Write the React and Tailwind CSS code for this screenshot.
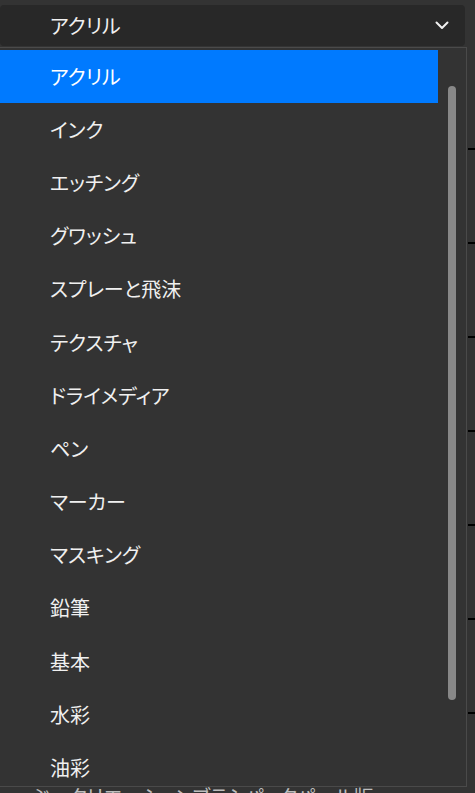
import React from 'react';

const brushes = [
  'アクリル',
  'インク',
  'エッチング',
  'グワッシュ',
  'スプレーと飛沫',
  'テクスチャ',
  'ドライメディア',
  'ペン',
  'マーカー',
  'マスキング',
  '鉛筆',
  '基本',
  '水彩',
  '油彩',
];

const font = "font-['Yu_Gothic_UI','Noto_Sans_CJK_JP',sans-serif] [font-feature-settings:'palt']";

const App = () => {
  const selected = 'アクリル';

  return (
    <div className={`relative h-[793px] w-[475px] overflow-hidden bg-[#333333] ${font}`}>
      {/* select button */}
      <div className="pt-[5px]">
        <button className="flex h-[41px] w-[465px] items-center justify-between rounded-[4px] bg-[#282828] pl-[50px] pr-[16px] text-[20px] text-[#f0f0f0]">
          <span>{selected}</span>
          <svg width="14" height="9" viewBox="0 0 14 9" fill="none">
            <path d="M1.5 1.5 L7 7 L12.5 1.5" stroke="#f0f0f0" strokeWidth="2" strokeLinecap="round" strokeLinejoin="round" />
          </svg>
        </button>
      </div>

      {/* page content under the menu */}
      <div className="flex justify-end pt-[102px]">
        <div className="flex w-[7px] flex-col gap-[92px]">
          {[0, 1, 2, 3, 4, 5, 6].map((i) => (
            <div key={i} className="h-[2px] bg-black" />
          ))}
        </div>
      </div>
      <div className="absolute left-[30px] top-[783px] text-[20px] leading-[28px] text-[#bdbdbd] whitespace-nowrap">
        ぶ　クリエーションブラシパックパール版
      </div>

      {/* dropdown list */}
      <div className="absolute left-0 top-[47px] flex h-[740px] w-[467px] border-r border-b border-t border-[#4a4a4a] bg-[#333333] pt-[2px]">
        <ul className="w-[438px] overflow-hidden">
          {brushes.map((name) => (
            <li
              key={name}
              className={`flex h-[53.2px] shrink-0 items-center pl-[50px] text-[20px] ${
                name === selected ? 'bg-[#007aff] text-white' : 'text-[#f0f0f0]'
              }`}
            >
              {name}
            </li>
          ))}
        </ul>
        <div className="flex flex-1 justify-center pt-[36px]">
          <div className="h-[614px] w-[8px] rounded-t-full rounded-b-full bg-[#888888]" />
        </div>
      </div>
    </div>
  );
};

export default App;
